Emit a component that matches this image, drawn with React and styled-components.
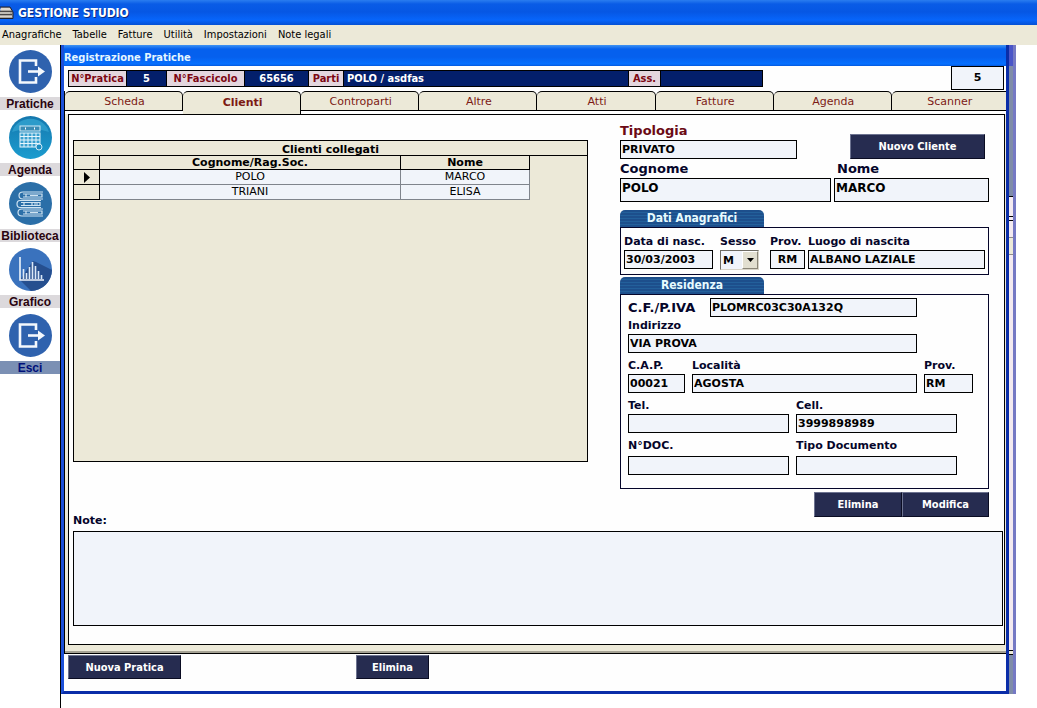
import styled, { createGlobalStyle, css } from 'styled-components'

const menuItems = ['Anagrafiche', 'Tabelle', 'Fatture', 'Utilità', 'Impostazioni', 'Note legali']

const tabs = ['Scheda', 'Clienti', 'Controparti', 'Altre', 'Atti', 'Fatture', 'Agenda', 'Scanner']

const clienti = [
    { cognome: 'POLO', nome: 'MARCO' },
    { cognome: 'TRIANI', nome: 'ELISA' },
]

const PrinterIcon = () => (
    <svg width="14" height="14" viewBox="0 0 14 14" aria-hidden="true">
        <path d="M0 6 L1 1 H10 L13 6 V12 H0Z" fill="#a9a5a0" />
        <path d="M1 2 H10 L11 4 H0Z" fill="#dedad2" />
        <path d="M0 5.500 H12 M0 8.500 H12" stroke="#4a4646" strokeWidth="1" />
        <path d="M0 7 H10 M0 10.500 H12" stroke="#d8d4cc" />
        <path d="M0 1 H10 L13 6 V12.500 H0" stroke="#20202c" fill="none" />
    </svg>
)

const ExitIcon = () => (
    <svg width="43" height="43" viewBox="0 0 43 43" aria-hidden="true">
        <circle cx="21.500" cy="21.500" r="21.500" fill="#2f62ae" />
        <path d="M27 16 V10.500 H11 V32.500 H27 V27" fill="none" stroke="#f4f8fd" strokeWidth="2.600" />
        <path d="M19 21.500 H31" stroke="#f4f8fd" strokeWidth="2.600" />
        <path d="M29 16.500 L36 21.500 L29 26.500Z" fill="#f4f8fd" />
    </svg>
)

const CalendarIcon = () => (
    <svg width="43" height="43" viewBox="0 0 43 43" aria-hidden="true">
        <defs>
            <linearGradient id="sky" x1="0" y1="0" x2="0" y2="1">
                <stop offset="0" stopColor="#1577ad" />
                <stop offset="1" stopColor="#1b9ccf" />
            </linearGradient>
        </defs>
        <circle cx="21.500" cy="21.500" r="21.500" fill="url(#sky)" />
        <path d="M3 16 A19.500 19.500 0 0 1 40 16 Q21 9 3 16Z" fill="#2c9bca" />
        <rect x="11" y="10" width="20" height="5" fill="#3b8cb5" stroke="#cfeaf7" />
        <path d="M16 12.500 h1 M25 12.500 h1" stroke="#fff" strokeWidth="2" />
        <rect x="11" y="17" width="20" height="14" fill="#3aa0cf" stroke="#e6f6fd" />
        <path d="M15 17 V31 M19 17 V31 M23 17 V31 M27 17 V31 M11 20.500 H31 M11 24 H31 M11 27.500 H31" stroke="#e6f6fd" />
        <circle cx="30" cy="31" r="3" fill="#1c8cc0" stroke="#cfeaf7" />
    </svg>
)

const BooksIcon = () => (
    <svg width="43" height="43" viewBox="0 0 43 43" aria-hidden="true">
        <circle cx="21.500" cy="21.500" r="21.500" fill="#2b6fa8" />
        <g fill="none" stroke="#cfe3f1" strokeWidth="1.200">
            <path d="M34 10 H14 Q10 10 10 13.500 Q10 17 14 17 H34 M14 12 H33 V15 H14 M17 12 V15 M21 13.500 H29" />
            <path d="M32 18.500 H11 Q8 18.500 8 22 Q8 25.500 11 25.500 H32 M12 20.500 H31 V23.500 H12 M15 20.500 V23.500 M23 20.500 V23.500 M25 22 H29" />
            <path d="M34 27 H13 Q9 27 9 30.500 Q9 34 13 34 H34 M14 29 H33 V32 H14 M17 29 V32 M21 30.500 H29" />
        </g>
    </svg>
)

const ChartIcon = () => (
    <svg width="43" height="43" viewBox="0 0 43 43" aria-hidden="true">
        <circle cx="21.500" cy="21.500" r="21.500" fill="#3a72bd" />
        <path d="M11 32 L22 43 A21.500 21.500 0 0 0 43 22 L27 14 L24 13Z" fill="#264f8f" />
        <path d="M11 9 V32 H35" fill="none" stroke="#eef4fb" strokeWidth="1.600" />
        <path d="M14.500 31 V21 M17.500 31 V25 M20.500 31 V19 M23.500 31 V14 M26.500 31 V18 M29.500 31 V23 M32.500 31 V27" stroke="#dce9f7" strokeWidth="1.600" />
    </svg>
)

const sideItems = [
    { label: 'Pratiche', Icon: ExitIcon },
    { label: 'Agenda', Icon: CalendarIcon },
    { label: 'Biblioteca', Icon: BooksIcon },
    { label: 'Grafico', Icon: ChartIcon },
    { label: 'Esci', Icon: ExitIcon, active: true },
]

const LabeledInput = ({ id, label, width, ...rest }) => (
    <Field $width={width}>
        <Label htmlFor={id}>{label}</Label>
        <Input id={id} {...rest} />
    </Field>
)

const Anagrafica = () => (
    <Details>
        <Row $justify="space-between" $align="end">
            <Field $width="177px">
                <Label htmlFor="tipologia" $large $color="#6b0a14">Tipologia</Label>
                <Input id="tipologia" defaultValue="PRIVATO" />
            </Field>
            <ButtonSlot>
                <Button $width="135px">Nuovo Cliente</Button>
            </ButtonSlot>
        </Row>
        <Row $gap="3px">
            <Field $grow>
                <Label htmlFor="cognome" $large>Cognome</Label>
                <Input id="cognome" $tall defaultValue="POLO" />
            </Field>
            <Field $width="155px">
                <Label htmlFor="nome" $large $indent>Nome</Label>
                <Input id="nome" $tall defaultValue="MARCO" />
            </Field>
        </Row>

        <Section>
            <SectionTitle>Dati Anagrafici</SectionTitle>
            <SectionBox $padding="5px 3px 4px">
                <Row $gap="7px">
                    <LabeledInput id="nascita" label="Data di nasc." width="89px" defaultValue="30/03/2003" />
                    <Field $width="43px">
                        <Label htmlFor="sesso">Sesso</Label>
                        <SelectWrap>
                            <Select id="sesso" defaultValue="M">
                                <option>M</option>
                                <option>F</option>
                            </Select>
                            <Arrow aria-hidden="true">
                                <svg width="7" height="4" viewBox="0 0 7 4"><path d="M0 0h7L3.500 4z" /></svg>
                            </Arrow>
                        </SelectWrap>
                    </Field>
                    <Row $gap="3px" $grow>
                        <LabeledInput id="provNascita" label="Prov." width="35px" $center defaultValue="RM" />
                        <Field $grow>
                            <Label htmlFor="luogo">Luogo di nascita</Label>
                            <Input id="luogo" defaultValue="ALBANO LAZIALE" />
                        </Field>
                    </Row>
                </Row>
            </SectionBox>
        </Section>

        <Section $tight>
            <SectionTitle>Residenza</SectionTitle>
            <SectionBox $padding="3px 7px 13px">
                <Stack>
                    <div>
                        <InlineField>
                            <Label htmlFor="cf" $large>C.F./P.IVA</Label>
                            <Input id="cf" defaultValue="PLOMRC03C30A132Q" />
                        </InlineField>
                        <LabeledInput id="indirizzo" label="Indirizzo" width="289px" defaultValue="VIA PROVA" />
                    </div>
                    <Row $gap="7px">
                        <LabeledInput id="cap" label="C.A.P." width="57px" defaultValue="00021" />
                        <LabeledInput id="localita" label="Località" width="225px" defaultValue="AGOSTA" />
                        <LabeledInput id="prov" label="Prov." width="49px" defaultValue="RM" />
                    </Row>
                    <Row $gap="7px">
                        <LabeledInput id="tel" label="Tel." width="161px" />
                        <LabeledInput id="cell" label="Cell." width="161px" defaultValue="3999898989" />
                    </Row>
                    <DocumentRow $gap="7px">
                        <LabeledInput id="ndoc" label="N°DOC." width="161px" />
                        <LabeledInput id="tipoDoc" label="Tipo Documento" width="161px" />
                    </DocumentRow>
                </Stack>
            </SectionBox>
        </Section>

        <Actions>
            <Button $width="88px">Elimina</Button>
            <Button $width="87px">Modifica</Button>
        </Actions>
    </Details>
)

const App = () => {
    return (
        <Page>
            <GlobalStyle />
            <TitleBar>
                <PrinterIcon />
                <h1>GESTIONE STUDIO</h1>
            </TitleBar>
            <MenuBar>
                {menuItems.map((item) => (
                    <button key={item}>{item}</button>
                ))}
            </MenuBar>
            <Workspace>
                <Sidebar>
                    {sideItems.map(({ label, Icon, active }) => (
                        <SideButton key={label} $active={active}>
                            <Icon />
                            <span>{label}</span>
                        </SideButton>
                    ))}
                </Sidebar>
                <Window>
                    <WindowTitle>Registrazione Pratiche</WindowTitle>
                    <WindowBody>
                        <InfoBar>
                            <InfoStrip>
                                <Tag $width="58px">N°Pratica</Tag>
                                <Value $width="40px" $center>5</Value>
                                <Tag $width="78px">N°Fascicolo</Tag>
                                <Value $width="64px" $center>65656</Value>
                                <Tag $width="35px">Parti</Tag>
                                <Value $width="285px">POLO / asdfas</Value>
                                <Tag $width="32px">Ass.</Tag>
                                <Value $width="102px" />
                            </InfoStrip>
                            <Counter>5</Counter>
                        </InfoBar>
                        <Tabs role="tablist">
                            {tabs.map((tab) => (
                                <Tab key={tab} role="tab" aria-selected={tab === 'Clienti'} $active={tab === 'Clienti'}>
                                    {tab}
                                </Tab>
                            ))}
                        </Tabs>
                        <TabFrame>
                            <Panel>
                                <Columns>
                                    <GridFrame>
                                        <GridTitle>Clienti collegati</GridTitle>
                                        <Table>
                                            <thead>
                                                <tr>
                                                    <th className="marker"></th>
                                                    <th className="cognome">Cognome/Rag.Soc.</th>
                                                    <th>Nome</th>
                                                </tr>
                                            </thead>
                                            <tbody>
                                                {clienti.map((c, i) => (
                                                    <tr key={c.cognome}>
                                                        <td className="marker">
                                                            {i === 0 && (
                                                                <svg width="6" height="11" viewBox="0 0 6 11"><path d="M0 0v11l6-5.500z" /></svg>
                                                            )}
                                                        </td>
                                                        <td>{c.cognome}</td>
                                                        <td>{c.nome}</td>
                                                    </tr>
                                                ))}
                                            </tbody>
                                        </Table>
                                    </GridFrame>
                                    <Anagrafica />
                                </Columns>
                                <Notes>
                                    <Label htmlFor="note">Note:</Label>
                                    <textarea id="note" />
                                </Notes>
                            </Panel>
                        </TabFrame>
                        <Footer>
                            <Button $width="113px">Nuova Pratica</Button>
                            <Button $width="73px">Elimina</Button>
                        </Footer>
                    </WindowBody>
                </Window>
                <BackWindow />
            </Workspace>
        </Page>
    )
}

const verdana = `'DejaVu Sans', Verdana, sans-serif`
const tahoma = `'DejaVu Sans Condensed', Tahoma, 'DejaVu Sans', sans-serif`

const GlobalStyle = createGlobalStyle`
    * {
        box-sizing: border-box;
    }
    body {
        margin: 0;
        background: #fff;
        font-family: ${verdana};
        font-size: 11px;
        color: #000;
    }
    button, input, select, textarea {
        font: inherit;
        color: inherit;
        border-radius: 0;
        margin: 0;
    }
`

const Page = styled.div`
    display: flex;
    flex-direction: column;
    min-height: 100vh;
`

const TitleBar = styled.header`
    display: flex;
    align-items: center;
    gap: 4px;
    height: 25px;
    background: linear-gradient(#2a7df0 0, #0a5ce6 4px, #0657e4 12px, #0765fb 20px, #0450d4 25px);

    h1 {
        margin: 0;
        font-family: ${tahoma};
        font-size: 12px;
        font-weight: 700;
        color: #fff;
        text-shadow: 1px 1px 0 #0a2a80;
    }
`

const MenuBar = styled.nav`
    display: flex;
    gap: 11px;
    height: 20px;
    padding: 0 2px;
    background: #ece9d8;

    button {
        padding: 0;
        border: 0;
        background: none;
        font-family: ${tahoma};
        line-height: 18px;
    }
`

const Workspace = styled.div`
    flex: 1;
    display: flex;
    align-items: flex-start;
    padding-right: 21px;
`

const Sidebar = styled.nav`
    align-self: stretch;
    display: flex;
    flex-direction: column;
    gap: 6px;
    width: 61px;
    flex-shrink: 0;
    padding-top: 5px;
    border-right: 1px solid #000;
`

const SideButton = styled.button`
    display: flex;
    flex-direction: column;
    align-items: center;
    gap: 4px;
    padding: 0;
    border: 0;
    background: none;

    span {
        width: 100%;
        background: ${({ $active }) => ($active ? '#7b90b4' : '#dcd9dc')};
        color: ${({ $active }) => ($active ? '#00107a' : '#2a0410')};
        font-family: 'Liberation Sans', Arial, sans-serif;
        font-size: 12px;
        font-weight: 700;
        line-height: 14px;
        height: 13px;
        text-align: center;
        white-space: nowrap;
    }
`

const Window = styled.main`
    flex: 1;
    min-width: 0;
    border: solid #0a2da8;
    border-width: 0 3px 3px;
    border-left-color: #1c50d8;
`

const WindowTitle = styled.h2`
    margin: 0;
    height: 21px;
    background: linear-gradient(#3f93f2 0, #0560ee 4px, #0560ee 12px, #0670ff 19px, #0458dc 21px);
    color: #e4f6ff;
    font-family: ${tahoma};
    font-size: 11px;
    font-weight: 700;
    line-height: 25px;
`

const WindowBody = styled.div`
    background: #fefefe;
`

const InfoBar = styled.div`
    display: flex;
    justify-content: space-between;
    align-items: flex-start;
    height: 25px;
    padding: 0 2px 0 4px;
`

const InfoStrip = styled.div`
    display: flex;
    margin-top: 4px;
    border: solid #000;
    border-width: 1px 1px 1px 0;
    font-family: ${tahoma};
    font-weight: 700;
    line-height: 15px;
`

const Tag = styled.span`
    width: ${({ $width }) => $width};
    border-left: 1px solid #000;
    background: #e3d6de;
    color: #7c0612;
    text-align: center;
    white-space: nowrap;
`

const Value = styled.span`
    width: ${({ $width }) => $width};
    padding: 0 3px;
    border-left: 1px solid #000;
    background: #031f6b;
    color: #fff;
    text-align: ${({ $center }) => ($center ? 'center' : 'left')};
`

const Counter = styled.output`
    width: 53px;
    border: 1px solid #000;
    background: #f1f4fa;
    font-weight: 700;
    line-height: 22px;
    text-align: center;
`

const Tabs = styled.div`
    display: flex;
    height: 23px;
    border-left: 1px solid #000;
`

const Tab = styled.button`
    flex: 118;
    height: 20px;
    padding: 0 0 0 2px;
    border: solid #000;
    border-width: 1px 1px 1px 0;
    border-radius: 5px 5px 0 0;
    background: #ece9d8;
    color: #7c1a14;

    &:last-child {
        flex-grow: 115;
        border-right: 0;
        border-top-right-radius: 0;
    }

    ${({ $active }) => $active && css`
        height: 23px;
        padding-bottom: 2px;
        border-bottom: 0;
        font-weight: 700;
    `}
`

const TabFrame = styled.div`
    padding: 0 1px 8px 3px;
    border-left: 1px solid #000;
    border-bottom: 1px solid #000;
    background: #ece9d8;
    box-shadow: inset 0 -2px 0 #a5a294;
`

const Panel = styled.section`
    border: 1px solid #000;
    background: #fefefe;
    padding: 6px 1px 18px 4px;
`

const Columns = styled.div`
    display: grid;
    grid-template-columns: minmax(0, 1fr) 369px;
    gap: 32px;
    padding-right: 14px;
`

const GridFrame = styled.div`
    margin: 19px 0 55px;
    border: 1px solid #000;
    background: #ece9d8;
`

const GridTitle = styled.div`
    border-bottom: 1px solid #000;
    font-weight: 700;
    line-height: 13px;
    padding-top: 2px;
    height: 15px;
    text-align: center;
`

const Table = styled.table`
    width: 456px;
    max-width: 100%;
    border-collapse: separate;
    border-spacing: 0;
    table-layout: fixed;

    th, td {
        height: 15px;
        padding: 0;
        border: solid #80848c;
        border-width: 0 1px 1px 0;
        line-height: 14px;
        text-align: center;
    }
    th {
        height: 14px;
        line-height: 13px;
    }
    td {
        background: #f1f4fa;
    }
    th, .marker {
        border-color: #000;
        background: #ece9d8;
    }
    th.marker {
        width: 26px;
    }
    .cognome {
        width: 301px;
    }
    svg {
        display: block;
        margin: 0 auto;
    }
`

const Details = styled.form`
    display: flex;
    flex-direction: column;
`

const Row = styled.div`
    display: flex;
    gap: ${({ $gap }) => $gap || 0};
    justify-content: ${({ $justify }) => $justify || 'flex-start'};
    align-items: ${({ $align }) => $align || 'stretch'};
    ${({ $grow }) => $grow && 'flex: 1; min-width: 0;'}
`

const DocumentRow = styled(Row)`
    label {
        padding-bottom: 2px;
    }
`

const Stack = styled.div`
    display: flex;
    flex-direction: column;
    gap: 4px;
`

const Field = styled.div`
    display: flex;
    flex-direction: column;
    width: ${({ $width }) => $width || 'auto'};
    ${({ $grow }) => $grow && 'flex: 1; min-width: 0;'}
`

const InlineField = styled.div`
    display: flex;
    justify-content: space-between;
    align-items: center;
    width: 289px;

    input {
        width: 207px;
    }
`

const Label = styled.label`
    color: ${({ $color }) => $color || '#05052a'};
    font-size: ${({ $large }) => ($large ? '13px' : '11px')};
    font-weight: 700;
    line-height: ${({ $large }) => ($large ? '19px' : '17px')};
    padding-left: ${({ $indent }) => ($indent ? '3px' : 0)};
    white-space: nowrap;
`

const Input = styled.input`
    width: 100%;
    height: ${({ $tall }) => ($tall ? '24px' : '19px')};
    padding: 0 1px ${({ $tall }) => ($tall ? '4px' : 0)};
    border: 1px solid #000;
    background: #f1f4fa;
    font-size: ${({ $tall }) => ($tall ? '12px' : '11px')};
    font-weight: 700;
    text-align: ${({ $center }) => ($center ? 'center' : 'left')};
`

const SelectWrap = styled.div`
    position: relative;
    width: 39px;
    height: 20px;
`

const Select = styled.select`
    appearance: none;
    width: 100%;
    height: 100%;
    padding: 0 2px;
    border: 1px solid;
    border-color: #6f6c64 #d8d4c8 #d8d4c8 #6f6c64;
    background: #f1f4fa;
    font-weight: 700;
`

/* drawn over the select, clicks go through to it */
const Arrow = styled.span`
    position: absolute;
    top: 1px;
    right: 1px;
    bottom: 1px;
    width: 16px;
    display: grid;
    place-items: center;
    border: 1px solid;
    border-color: #fff #8a8678 #8a8678 #fff;
    background: #e2dfd0;
    pointer-events: none;
`

const Section = styled.section`
    margin-top: ${({ $tight }) => ($tight ? '2px' : '8px')};
`

const SectionTitle = styled.h3`
    width: 144px;
    height: 17px;
    margin: 0;
    border-radius: 5px 5px 0 0;
    background: repeating-linear-gradient(#1d4f8c 0 2px, #23609b 2px 3px);
    color: #e8fbff;
    font-family: ${tahoma};
    font-size: 12px;
    font-weight: 700;
    line-height: 17px;
    text-align: center;
`

const SectionBox = styled.div`
    border: 1px solid #05052a;
    padding: ${({ $padding }) => $padding};
`

const ButtonSlot = styled.div`
    padding-right: 4px;
`

const Button = styled.button.attrs({ type: 'button' })`
    width: ${({ $width }) => $width};
    height: 25px;
    padding: 0;
    border: 1px solid;
    border-color: #6d7390 #0a0c22 #0a0c22 #6d7390;
    background: #262c50;
    color: #fff;
    font-family: ${tahoma};
    font-weight: 700;
`

const Actions = styled.div`
    display: flex;
    justify-content: flex-end;
    margin-top: 3px;
`

/* the label tucks in beside the row of buttons above it */
const Notes = styled.div`
    display: flex;
    flex-direction: column;
    gap: 2px;
    margin-top: -5px;

    textarea {
        height: 95px;
        border: 1px solid #000;
        background: #f1f4fa;
        resize: none;
    }
`

const Footer = styled.footer`
    display: flex;
    gap: 175px;
    padding: 1px 4px 12px;

    button {
        height: 24px;
    }
`

/* the edge of the window that sits behind the open one */
const BackWindow = styled.aside`
    align-self: stretch;
    width: 7px;
    max-height: 649px;
    border-right: 3px solid #7579c4;
    background: linear-gradient(
        #4a55c8 0 21px,
        #7f8ca8 21px 151px,
        #000 151px 152px,
        #f3eaf0 152px 171px,
        #000 171px 172px,
        #f3eaf0 172px 175px,
        #000 175px 176px,
        #f3eaf0 176px 192px,
        #8f8c88 192px 193px,
        #ece9d8 193px 209px,
        #8f8c88 209px 210px,
        #f3eaf0 210px 605px,
        #000 605px 606px,
        #ece9d8 606px 609px,
        #000 609px 610px,
        #7f8ca8 610px
    );
`

export default App
